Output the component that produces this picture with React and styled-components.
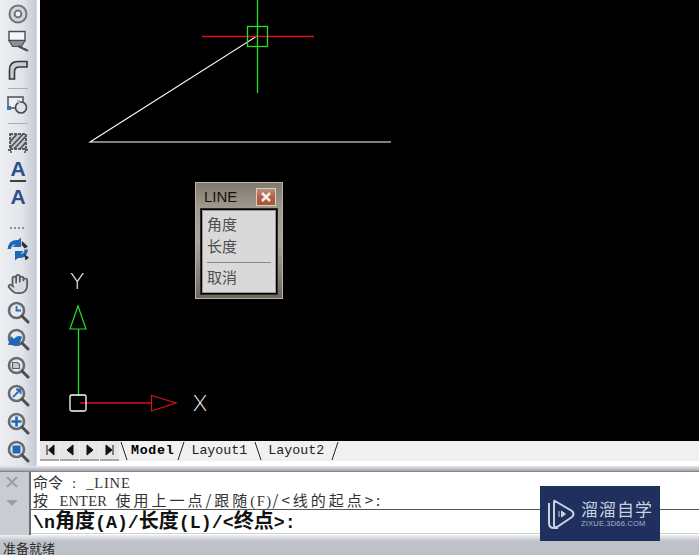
import React from 'react';
import styled, { createGlobalStyle } from 'styled-components';
import { Hand } from 'lucide-react';

const GlobalStyle = createGlobalStyle`
  html, body {
    margin: 0;
    padding: 0;
    background: #fff;
    overflow: hidden;
  }
`;

const Shell = styled.div`
  position: relative;
  width: 699px;
  height: 555px;
  display: flex;
  flex-direction: column;
  overflow: hidden;
  font-family: "Liberation Sans", "Noto Sans CJK SC", sans-serif;
`;

const Work = styled.div`
  height: 466px;
  display: flex;
`;

const Toolbar = styled.div`
  width: 36px;
  flex: none;
  display: flex;
  flex-direction: column;
  align-items: center;
  background: linear-gradient(90deg, #eceef2 0%, #e2e5ea 60%, #c6cad2 100%);
  border-right: 1px solid #d8dbe0;
`;

const ToolSlot = styled.div`
  width: 24px;
  height: 24px;
  flex: none;
  margin-top: ${(p) => p.$gap}px;
  display: flex;
  align-items: center;
  justify-content: center;
`;

const ToolRule = styled.div`
  width: 20px;
  height: 1px;
  flex: none;
  margin-top: ${(p) => p.$gap}px;
  background: #a9adb5;
`;

const ToolDots = styled.div`
  width: 16px;
  height: 2px;
  flex: none;
  margin-top: ${(p) => p.$gap}px;
  background: repeating-linear-gradient(90deg, #8d929a 0 2px, transparent 2px 4px);
`;

const LetterIcon = styled.span`
  font: bold 21px/20px "Liberation Sans", sans-serif;
  color: #2f4f86;
  padding-bottom: ${(p) => (p.$underline ? 1 : 0)}px;
  border-bottom: ${(p) => (p.$underline ? '2px solid #3a4048' : 'none')};
`;

const Main = styled.div`
  flex: 1;
  min-width: 0;
  margin-left: 3px;
  display: flex;
  flex-direction: column;
`;

const Canvas = styled.div`
  position: relative;
  height: 441px;
  background: #000;
`;

const Drawing = styled.svg`
  display: block;
  width: 100%;
  height: 100%;
`;

const AxisLabel = styled.text`
  font: 200 22px "Inter", "Liberation Sans", sans-serif;
  fill: #fff;
`;

/* right-click menu floating over the drawing area */
const Popup = styled.div`
  position: absolute;
  left: 155px;
  top: 182px;
  width: 88px;
  height: 117px;
  box-sizing: border-box;
  padding: 1px 5px 0 5px;
  border: 1px solid #b9b3a7;
  background: linear-gradient(180deg, #7f7a70 0%, #a09a8f 22%, #aaa59b 50%, #8e897f 75%, #6d685f 100%);
  display: flex;
  flex-direction: column;
`;

const PopupHead = styled.div`
  height: 25px;
  flex: none;
  display: flex;
  align-items: center;
  justify-content: space-between;
  font-size: 15px;
  color: #14130f;
  margin-left: 3px;
  margin-right: 1px;
`;

const CloseBox = styled.div`
  width: 20px;
  height: 18px;
  display: flex;
  align-items: center;
  justify-content: center;
  background: linear-gradient(180deg, #b9907e 0%, #b65a3c 55%, #a7563f 100%);
  border: 1px solid #d8cfc4;
  box-sizing: border-box;
  margin-top: 1px;
`;

const PopupMenu = styled.div`
  width: 76px;
  height: 85px;
  box-sizing: border-box;
  border: 1px solid #000;
  box-shadow: 0 0 0 1px #2c2b28, inset 0 0 0 1px #9a9a9a;
  background: #d9d9d9;
  padding: 3px 5px 0 5px;
  color: #4e4e4e;
  font: 15px/22px "Noto Sans CJK SC", sans-serif;
`;

const MenuRule = styled.div`
  height: 1px;
  background: #8a8a8a;
  margin: 5px 0 3px 0;
`;

const TabBar = styled.div`
  height: 20px;
  flex: none;
  display: flex;
  background: #f0f0f0;
`;

const NavButton = styled.div`
  width: 19px;
  height: 20px;
  flex: none;
  margin-right: 1px;
  display: flex;
  align-items: center;
  justify-content: center;
  background: #e6e6e6;
  border-bottom: 2px solid #a9a9a9;
  box-sizing: border-box;
`;

const Tabs = styled.div`
  display: flex;
  align-items: center;
  height: 20px;
  font: 13.3px/20px "Liberation Mono", monospace;
  color: #222;
`;

const Tab = styled.span`
  margin: ${(p) => (p.$active ? '0 3px 0 3px' : '0 7px 0 6px')};
  font-weight: ${(p) => (p.$active ? 700 : 400)};
  letter-spacing: ${(p) => (p.$active ? 0.7 : 0)}px;
  color: ${(p) => (p.$active ? '#000' : '#222')};
`;

const Slant = styled.svg`
  width: 8px;
  height: 20px;
  flex: none;
  display: block;
`;

const Splitter = styled.div`
  height: 6px;
  flex: none;
  background: linear-gradient(180deg, #e6e8eb 0%, #c2c6cb 45%, #a2a6ab 85%, #55585c 100%);
`;

const CommandPane = styled.div`
  height: 63px;
  flex: none;
  display: flex;
`;

const Grip = styled.div`
  width: 29px;
  flex: none;
  display: flex;
  flex-direction: column;
  align-items: center;
  gap: 12px;
  padding: 4px 5px 0 0;
  box-sizing: border-box;
  background: #c9cdd3;
`;

const GripArrow = styled.div`
  width: 0;
  height: 0;
  border-left: 6px solid transparent;
  border-right: 6px solid transparent;
  border-top: 6px solid #9ba0a8;
`;

const History = styled.div`
  flex: 1;
  min-width: 0;
  background: #fff;
  border-left: 2px solid #6d6d6d;
  padding-top: 1px;
  box-sizing: border-box;
  display: flex;
  flex-direction: column;
`;

const HistoryLine = styled.div`
  height: 18px;
  padding-left: 2px;
  white-space: nowrap;
  font: 15px/18px "Noto Sans CJK SC", sans-serif;
  letter-spacing: ${(p) => p.$spacing}px;
  word-spacing: ${(p) => p.$words}px;
  color: #333;
`;

// latin runs of the command text sit in a narrower serif than the CJK
const Latin = styled.span`
  font: 14.5px/1 "Liberation Serif", serif;
  letter-spacing: ${(p) => p.$spacing || 0}px;
  word-spacing: ${(p) => p.$words || 0}px;
  margin-left: ${(p) => p.$left || 0}px;
`;

const Prompt = styled.div`
  height: 25px;
  box-sizing: border-box;
  padding-left: 2px;
  border-top: 1px solid #555;
  border-bottom: 1px solid #d0d0d0;
  white-space: nowrap;
  font: bold 18.3px/23px "Liberation Mono", monospace;
  color: #111;
`;

const Han = styled.span`
  font: bold 20px/1 "Noto Sans CJK SC", sans-serif;
`;

const StatusBar = styled.div`
  flex: 1;
  display: flex;
  align-items: flex-end;
  padding-left: 3px;
  overflow: hidden;
  background: linear-gradient(180deg, #eef0f2 0px, #bfc3c9 6px, #bcc1c7 100%);
  font: 13px/14px "Noto Sans CJK SC", sans-serif;
  color: #2b2b2b;
`;

const Badge = styled.div`
  position: absolute;
  left: 540px;
  top: 486px;
  width: 120px;
  height: 55px;
  display: flex;
  align-items: center;
  gap: 5px;
  box-sizing: border-box;
  padding-left: 6px;
  background: #1f2f5e;
  color: #c9d1df;
`;

const BadgeText = styled.div`
  display: flex;
  flex-direction: column;
  align-items: flex-start;
`;

const BadgeTitle = styled.div`
  height: 20px;
  font: 17px/20px "Noto Sans CJK SC", sans-serif;
  letter-spacing: 1px;
  white-space: nowrap;
`;

const BadgeUrl = styled.div`
  height: 10px;
  font: 7.5px/10px "Liberation Sans", sans-serif;
  letter-spacing: 0.2px;
  color: #a9b3c6;
  white-space: nowrap;
`;

// shared magnifier for the zoom tools, the child goes inside the lens
const Lens = ({ children }) => (
  <svg width="24" height="24" viewBox="0 0 24 24">
    <circle cx="10.5" cy="10.5" r="7.5" fill="#e6e8ec" stroke="#666b72" strokeWidth="2.6" />
    <line x1="16" y1="16" x2="22" y2="22" stroke="#4a4e55" strokeWidth="3" strokeLinecap="round" />
    {children}
  </svg>
);

const Donut = () => (
  <svg width="22" height="22" viewBox="0 0 22 22">
    <circle cx="11" cy="11" r="8.5" fill="#d3d6db" stroke="#70747b" strokeWidth="2" />
    <circle cx="11" cy="11" r="3.4" fill="#eef0f3" stroke="#70747b" strokeWidth="2" />
  </svg>
);

const BlockTool = () => (
  <svg width="24" height="24" viewBox="0 0 24 24">
    <path d="M3 2.5h16v9H3z" fill="#f4f5f7" stroke="#4a4e55" strokeWidth="1.4" />
    <path d="M3 11.5h16l-3.5 6h-9z" fill="#8b9097" stroke="#4a4e55" strokeWidth="1.2" />
    <path d="M12 17l8 4" stroke="#4a4e55" strokeWidth="2.2" />
    <path d="M19 20l3 2" stroke="#2f4f86" strokeWidth="2" />
  </svg>
);

const Fillet = () => (
  <svg width="22" height="24" viewBox="0 0 22 24">
    <path d="M2.5 21V12Q2.5 3.5 11 3.5H20V9H12.5Q7.5 9 7.5 13.5V21Z" fill="#c9ccd2" stroke="#33363b" strokeWidth="1.6" />
  </svg>
);

const RectCircle = () => (
  <svg width="24" height="22" viewBox="0 0 24 22">
    <rect x="2" y="3" width="15" height="11" fill="#eceef1" stroke="#565b62" strokeWidth="1.6" />
    <circle cx="15" cy="13.5" r="5.5" fill="#dfe2e6" stroke="#45494f" strokeWidth="1.6" />
    <rect x="1" y="12" width="4" height="4" fill="#3d72b4" />
    <rect x="11" y="6" width="3" height="3" fill="#9fb6d3" />
  </svg>
);

const Hatch = () => (
  <svg width="22" height="24" viewBox="0 0 22 24">
    <rect x="3" y="4" width="16" height="15" fill="#c4c7cc" stroke="#33373c" strokeWidth="1.5" strokeDasharray="3 1" />
    <path d="M3 12l7-8M3 18l13-14M7 19l12-13M13 19l6-7" stroke="#4d5259" strokeWidth="1.7" />
    <path d="M1 20h3M18 20h3M4 21v2M18 21v2" stroke="#33373c" strokeWidth="1.3" />
  </svg>
);

const Regen = () => (
  <svg width="26" height="26" viewBox="0 0 24 24">
    <path d="M1.5 12Q2.5 2.5 12 3L15 0.5V10H6.5L9.5 7.2Q5.5 7.5 5 12Z" fill="#1f68b8" />
    <path d="M22 12.5Q21 22 12 21L9 23.5V14H17.5L14.5 17Q18.5 16.5 18.5 12.5Z" fill="#1f68b8" />
    <path d="M16 4l6 5.5-3.2 2-3.3-3.5zM18 17l5 3.5-3.5 3z" fill="#2c3036" />
  </svg>
);

const PanHand = () => <Hand size={22} strokeWidth={1.9} color="#565a61" fill="#d8dade" />;

const TOOLS = [
  { gap: 2, icon: <Donut /> },
  { gap: 3, icon: <BlockTool /> },
  { gap: 5, icon: <Fillet /> },
  { gap: 6, rule: true },
  { gap: 4, icon: <RectCircle /> },
  { gap: 6, rule: true },
  { gap: 6, icon: <Hatch /> },
  { gap: 4, icon: <LetterIcon $underline>A</LetterIcon> },
  { gap: 3, icon: <LetterIcon>A</LetterIcon> },
  { gap: 18, dots: true },
  { gap: 8, icon: <Regen /> },
  { gap: 11, icon: <PanHand /> },
  {
    gap: 4,
    icon: (
      <Lens>
        <path d="M10.5 6v4.5h4.5" fill="none" stroke="#2f6db5" strokeWidth="1.8" />
      </Lens>
    ),
  },
  {
    gap: 3,
    icon: (
      <Lens>
        <path d="M2 18l3-9 3 3c2-3 6-4 8-2l-3 8H2z" fill="#1f68b8" />
      </Lens>
    ),
  },
  {
    gap: 4,
    icon: (
      <Lens>
        <path d="M6.5 7.5h5l2 2v4h-7z" fill="#c5c8cd" stroke="#5b5f66" strokeWidth="1.2" />
      </Lens>
    ),
  },
  {
    gap: 4,
    icon: (
      <Lens>
        <path d="M7 14l7-7M10 6.5h4.5V11" fill="none" stroke="#2f6db5" strokeWidth="1.8" />
      </Lens>
    ),
  },
  {
    gap: 4,
    icon: (
      <Lens>
        <path d="M10.5 5.5v10M5.5 10.5h10" stroke="#1f68b8" strokeWidth="2.6" />
      </Lens>
    ),
  },
  {
    gap: 4,
    icon: (
      <Lens>
        <rect x="6.5" y="6.5" width="8" height="8" rx="1" fill="#1f68b8" />
      </Lens>
    ),
  },
];

const NAV = [
  'M5 3v10M12 3v10L6.5 8z',
  'M11 3v10L5 8z',
  'M5 3v10l6-5z',
  'M4 3v10l6-5zM11 3v10',
];

const SlantMark = ({ back }) => (
  <Slant viewBox="0 0 8 20">
    <line x1={back ? 1 : 7} y1="1" x2={back ? 7 : 1} y2="19" stroke="#222" strokeWidth="1" />
  </Slant>
);

const Badgemark = () => (
  <svg width="30" height="36" viewBox="0 0 30 36" fill="none" stroke="#c9d1df">
    <path d="M3 7V27Q3 32 8 32H12" strokeWidth="2" />
    <path d="M9 5L26 15Q29 18 26 21L11 31Q8 32 8 29V7Q8 4 9 5Z" strokeWidth="2" />
    <path d="M13 15v6M15.5 15l4 3-4 3z" fill="#c9d1df" strokeWidth="1" />
  </svg>
);

export default function App() {
  return (
    <Shell>
      <GlobalStyle />
      <Work>
        <Toolbar>
          {TOOLS.map((t, i) => {
            if (t.rule) return <ToolRule key={i} $gap={t.gap} />;
            if (t.dots) return <ToolDots key={i} $gap={t.gap} />;
            return (
              <ToolSlot key={i} $gap={t.gap}>
                {t.icon}
              </ToolSlot>
            );
          })}
        </Toolbar>
        <Main>
          <Canvas>
            <Drawing viewBox="40 0 659 441">
              {/* the line being drawn */}
              <path d="M257 36L90 142H391" fill="none" stroke="#fff" strokeWidth="1.1" />
              {/* crosshair */}
              <line x1="202" y1="36.5" x2="314" y2="36.5" stroke="#d8121c" strokeWidth="1.3" />
              <line x1="257.5" y1="0" x2="257.5" y2="93" stroke="#22e02c" strokeWidth="1.3" />
              <rect x="247.5" y="26.5" width="20" height="20" fill="none" stroke="#22e02c" strokeWidth="1.3" />
              {/* UCS icon */}
              <line x1="78.5" y1="329" x2="78.5" y2="396" stroke="#22e02c" strokeWidth="1.3" />
              <path d="M78 306L70 329H86Z" fill="none" stroke="#22e02c" strokeWidth="1.2" />
              <line x1="80" y1="403" x2="152" y2="403" stroke="#d8121c" strokeWidth="1.3" />
              <path d="M151.5 395.5V411L176 403Z" fill="none" stroke="#d8121c" strokeWidth="1.2" />
              <rect x="70" y="395" width="16" height="16" rx="1.5" fill="none" stroke="#fff" strokeWidth="1.3" />
              <AxisLabel x="70" y="289">Y</AxisLabel>
              <AxisLabel x="193" y="411">X</AxisLabel>
            </Drawing>
            <Popup>
              <PopupHead>
                LINE
                <CloseBox>
                  <svg width="12" height="12" viewBox="0 0 12 12">
                    <path d="M2 2l8 8M10 2l-8 8" stroke="#f2efe9" strokeWidth="2.6" />
                  </svg>
                </CloseBox>
              </PopupHead>
              <PopupMenu>
                <div>角度</div>
                <div>长度</div>
                <MenuRule />
                <div>取消</div>
              </PopupMenu>
            </Popup>
          </Canvas>
          <TabBar>
            {NAV.map((d) => (
              <NavButton key={d}>
                <svg width="16" height="16" viewBox="0 0 16 16">
                  <path d={d} fill="#111" stroke="#111" strokeWidth="1" />
                </svg>
              </NavButton>
            ))}
            <Tabs>
              <SlantMark back />
              <Tab $active>Model</Tab>
              <SlantMark />
              <Tab>Layout1</Tab>
              <SlantMark back />
              <Tab>Layout2</Tab>
              <SlantMark />
            </Tabs>
          </TabBar>
        </Main>
      </Work>
      <Splitter />
      <CommandPane>
        <Grip>
          <svg width="12" height="12" viewBox="0 0 12 12">
            <path d="M1 1l10 10M11 1L1 11" stroke="#9ba0a8" strokeWidth="2" />
          </svg>
          <GripArrow />
        </Grip>
        <History>
          <HistoryLine $spacing={0} $words={0}>
            命令<Latin $left={9} $spacing={0.8} $words={5}>: _LINE</Latin>
          </HistoryLine>
          <HistoryLine $spacing={3} $words={2}>
            按 <Latin $spacing={0.2}>ENTER</Latin> 使用上一点/跟随<Latin $spacing={1.5}>(F)</Latin>/&lt;线的起点&gt;:
          </HistoryLine>
          <Prompt>
            \n<Han>角度</Han>(A)/<Han>长度</Han>(L)/&lt;<Han>终点</Han>&gt;:
          </Prompt>
        </History>
      </CommandPane>
      <StatusBar>准备就绪</StatusBar>
      <Badge>
        <Badgemark />
        <BadgeText>
          <BadgeTitle>溜溜自学</BadgeTitle>
          <BadgeUrl>ZIXUE.3D66.COM</BadgeUrl>
        </BadgeText>
      </Badge>
    </Shell>
  );
}
